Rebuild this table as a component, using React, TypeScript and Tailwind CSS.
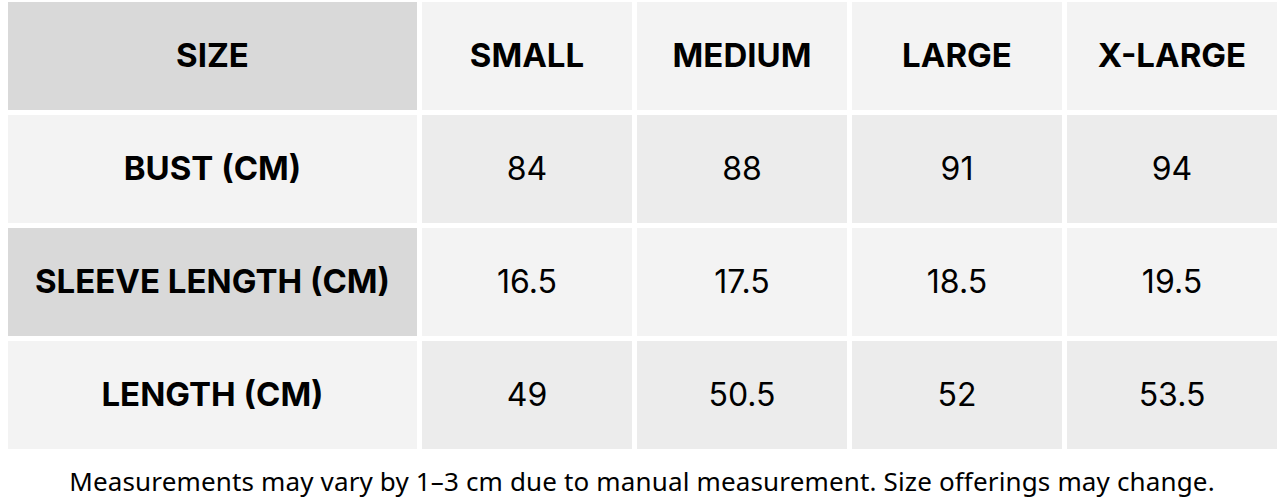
import React from "react";

const header = ["SIZE", "SMALL", "MEDIUM", "LARGE", "X-LARGE"];
const rows: { label: string; values: string[]; dark: boolean }[] = [
  { label: "BUST (CM)", values: ["84", "88", "91", "94"], dark: false },
  { label: "SLEEVE LENGTH (CM)", values: ["16.5", "17.5", "18.5", "19.5"], dark: true },
  { label: "LENGTH (CM)", values: ["49", "50.5", "52", "53.5"], dark: false },
];

export default function App() {
  return (
    <div className="w-[1284px] h-[504px] bg-white overflow-hidden" style={{ fontFamily: "Inter, 'Liberation Sans', sans-serif" }}>
      <div className="pt-[2px] pl-[8px] pr-[7px]">
        <div className="grid grid-cols-[409px_210px_210px_210px_210px] auto-rows-[108px] gap-x-[5px] gap-y-[5px] text-black">
          {header.map((h, i) => (
            <div
              key={h}
              className={`flex items-center justify-center text-[33px] font-bold ${i === 0 ? "bg-[#d9d9d9]" : "bg-[#f3f3f3]"}`}
            >
              {h}
            </div>
          ))}
          {rows.map((r) => (
            <React.Fragment key={r.label}>
              <div className={`flex items-center justify-center text-[33px] font-bold ${r.dark ? "bg-[#d9d9d9]" : "bg-[#f3f3f3]"}`}>
                {r.label}
              </div>
              {r.values.map((v, j) => (
                <div
                  key={j}
                  className={`flex items-center justify-center text-[32px] font-normal ${r.dark ? "bg-[#f3f3f3]" : "bg-[#ececec]"}`}
                >
                  {v}
                </div>
              ))}
            </React.Fragment>
          ))}
        </div>
      </div>
      <div
        className="text-center text-[26px] tracking-[0.15px] text-black pt-[16px] leading-[32px]"
        style={{ fontFamily: "'Noto Sans', 'Open Sans', sans-serif" }}
      >
        Measurements may vary by 1–3 cm due to manual measurement. Size offerings may change.
      </div>
    </div>
  );
}
